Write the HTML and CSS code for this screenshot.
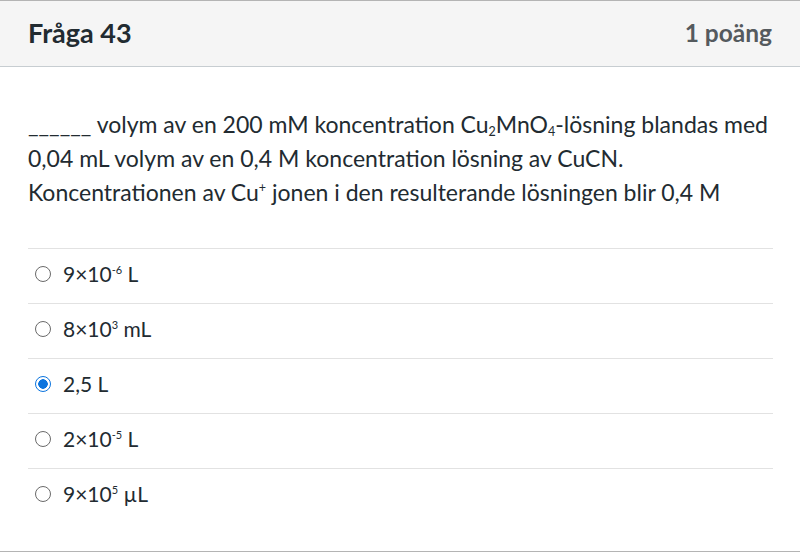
FILE: index.html
```html
<!DOCTYPE html>
<html lang="sv">
<head>
<meta charset="utf-8">
<link rel="stylesheet" href="styles.css">
</head>
<body>
<div class="question">
  <div class="header">
    <h2 class="title">Fråga 43</h2>
    <span class="points">1 poäng</span>
  </div>
  <div class="content">
    <p class="text">______ volym av en 200 mM koncentration Cu<sub>2</sub>MnO<sub>4</sub>-lösning blandas med<br>0,04 mL volym av en 0,4 M koncentration lösning av CuCN.<br>Koncentrationen av Cu<sup>+</sup> jonen i den resulterande lösningen blir 0,4 M</p>
    <div class="answers">
      <label class="answer"><span class="radio"></span><span>9×10<sup>-6</sup> L</span></label>
      <label class="answer"><span class="radio"></span><span>8×10<sup>3</sup> mL</span></label>
      <label class="answer"><span class="radio checked"></span><span>2,5 L</span></label>
      <label class="answer"><span class="radio"></span><span>2×10<sup>-5</sup> L</span></label>
      <label class="answer"><span class="radio"></span><span>9×10<sup>5</sup> µL</span></label>
    </div>
  </div>
</div>
</body>
</html>
```

FILE: styles.css
```css
html, body {
  margin: 0;
  padding: 0;
  background: #ffffff;
}
body {
  font-family: Lato, "Open Sans", "Liberation Sans", sans-serif;
  color: #222b31;
}
.question {
  border-top: 1px solid #b4b4b4;
  border-bottom: 1px solid #b4b4b4;
  height: 552px;
  box-sizing: border-box;
}
.header {
  display: flex;
  align-items: center;
  justify-content: space-between;
  height: 66px;
  padding: 0 28px 3px;
  box-sizing: border-box;
  background: #f5f5f5;
  border-bottom: 1px solid #c7cdd1;
}
.title {
  margin: 0;
  font-size: 27px;
  font-weight: 700;
  color: #222b31;
}
.points {
  font-size: 24.5px;
  font-weight: 700;
  color: #555a5e;
}
.content {
  padding: 40px 20px 0 28px;
}
.text {
  margin: 0;
  font-size: 23px;
  line-height: 34px;
  white-space: nowrap;
}
.text sub, .text sup {
  font-size: 12.5px;
  line-height: 0;
}
.text sub { vertical-align: -3px; }
.text sup { vertical-align: 9px; }
.answers {
  margin-top: 39px;
  margin-right: 7px;
}
.answer {
  display: flex;
  align-items: center;
  gap: 12px;
  height: 55px;
  box-sizing: border-box;
  border-top: 1px solid #e2e2e2;
  padding: 0 0 5px 7px;
  font-size: 21px;
}
.answer sup {
  font-size: 11px;
  line-height: 0;
  vertical-align: 8px;
}
.radio {
  width: 14px;
  height: 14px;
  border: 1.5px solid #6a6a6a;
  border-radius: 50%;
  box-sizing: content-box;
  flex: none;
}
.radio.checked {
  border-color: #0b74de;
  background: radial-gradient(circle, #0b74de 0 4.5px, #ffffff 5px);
}
```
